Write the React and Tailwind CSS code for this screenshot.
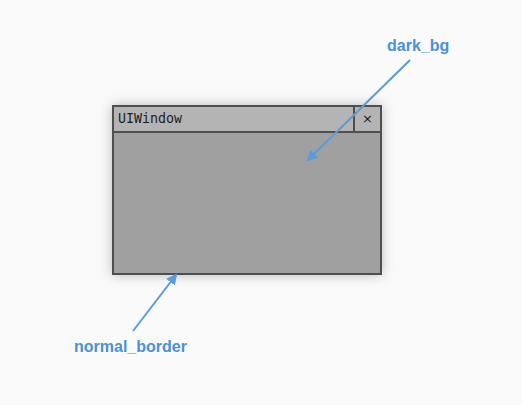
export default function App() {
  return (
    <div className="relative w-[522px] h-[405px] bg-[#fafafa] overflow-hidden">
      <div className="pt-[105px] pl-[112px]">
        <div className="w-[270px] h-[170px] flex flex-col border-2 border-[#4f4f4f] bg-[#a0a0a0] shadow-[0_0_12px_rgba(0,0,0,0.25)]">
          <div className="flex h-[26px] border-b-2 border-[#4f4f4f] bg-[#b4b4b4]">
            <div
              className="flex-1 flex items-center pl-[4px] text-[13.3px] text-[#1e1e1e]"
              style={{ fontFamily: '"DejaVu Sans Mono", monospace' }}
            >
              UIWindow
            </div>
            <div
              className="w-[27px] flex items-center justify-center border-l-2 border-[#4f4f4f] text-[13px] text-[#1e1e1e]"
              style={{ fontFamily: '"DejaVu Sans", sans-serif' }}
            >
              ×
            </div>
          </div>
          <div className="flex-1" />
        </div>
      </div>

      <svg className="absolute inset-0" width="522" height="405">
        <defs>
          <marker id="ah" markerWidth="11" markerHeight="11" refX="9" refY="5.5" orient="auto" markerUnits="userSpaceOnUse">
            <path d="M0,0 L11,5.5 L0,11 z" fill="#5b9bd8" />
          </marker>
        </defs>
        <line x1="410" y1="60" x2="308" y2="160" stroke="#5b9bd8" strokeWidth="2" markerEnd="url(#ah)" />
        <line x1="133" y1="331" x2="176" y2="275" stroke="#5b9bd8" strokeWidth="2" markerEnd="url(#ah)" />
      </svg>

      <div
        className="absolute left-[387px] top-[37px] leading-[18px] text-[16px] font-bold text-[#4a90d9]"
        style={{ fontFamily: '"Liberation Sans", Arial, sans-serif' }}
      >
        dark_bg
      </div>
      <div
        className="absolute left-[74px] top-[338px] leading-[18px] text-[16px] font-bold text-[#4a90d9]"
        style={{ fontFamily: '"Liberation Sans", Arial, sans-serif' }}
      >
        normal_border
      </div>
    </div>
  );
}
